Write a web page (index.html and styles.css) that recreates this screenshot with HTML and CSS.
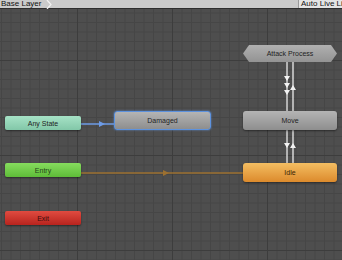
FILE: index.html
```html
<!DOCTYPE html>
<html lang="en">
<head>
  <meta charset="UTF-8">
  <title>Animator</title>
  <link rel="stylesheet" href="styles.css">
</head>
<body>
  <div class="toolbar">
    <div class="crumb">
      <span>Base Layer</span>
      <svg class="chevron" width="8" height="9" viewBox="0 0 8 9">
        <path d="M1 0 L5 4.5 L1 9" fill="none" stroke="#f2f2f2" stroke-width="1.2"/>
      </svg>
    </div>
    <div class="live-link">Auto Live Link</div>
  </div>

  <div class="graph">
    <svg class="links" width="342" height="251" viewBox="0 9 342 251">
      <!-- any state -> damaged -->
      <line x1="81" y1="124" x2="114" y2="124" stroke="#6d9be6" stroke-width="1.4"/>
      <polygon points="99,121 105,124 99,127" fill="#6d9be6"/>

      <!-- entry -> idle -->
      <line x1="81" y1="173" x2="243" y2="173" stroke="#9c7030" stroke-width="1.5"/>
      <polygon points="163,170 169,173 163,176" fill="#9c7030"/>

      <!-- attack process <-> move -->
      <line x1="287" y1="62" x2="287" y2="111" stroke="#ececec" stroke-width="1.3"/>
      <line x1="293" y1="62" x2="293" y2="111" stroke="#ececec" stroke-width="1.3"/>
      <polygon points="284,76 290,76 287,81" fill="#f2f2f2"/>
      <polygon points="284,83 290,83 287,88" fill="#f2f2f2"/>
      <polygon points="284,90 290,90 287,95" fill="#f2f2f2"/>
      <polygon points="290,90 296,90 293,85" fill="#f2f2f2"/>

      <!-- move <-> idle -->
      <line x1="287" y1="130" x2="287" y2="163" stroke="#ececec" stroke-width="1.3"/>
      <line x1="293" y1="130" x2="293" y2="163" stroke="#ececec" stroke-width="1.3"/>
      <polygon points="284,143 290,143 287,148" fill="#f2f2f2"/>
      <polygon points="290,148 296,148 293,143" fill="#f2f2f2"/>
    </svg>

    <div class="node any-state">Any State</div>
    <div class="node state damaged">Damaged</div>
    <div class="node machine">Attack Process</div>
    <div class="node state move">Move</div>
    <div class="node state idle">Idle</div>
    <div class="node entry">Entry</div>
    <div class="node exit">Exit</div>
  </div>
</body>
</html>
```

FILE: styles.css
```css
* {
  box-sizing: border-box;
}
body {
  margin: 0;
  width: 342px;
  height: 260px;
  overflow: hidden;
  font-family: 'Liberation Sans', Arial, sans-serif;
  background-color: #4a4a4a;
}
.toolbar {
  height: 9px;
  display: flex;
  justify-content: space-between;
  background-color: #cbcbcb;
  border-bottom: 1px solid #2e2e2e;
}
.crumb {
  display: flex;
  align-items: flex-start;
  gap: 5px;
  padding-left: 1px;
  font-size: 8px;
  line-height: 8px;
  color: #111;
}
.live-link {
  width: 44px;
  padding-left: 2px;
  font-size: 8px;
  line-height: 8px;
  white-space: nowrap;
  overflow: hidden;
  color: #111;
  background-color: #e4e4e4;
  border-left: 1px solid #9a9a9a;
}
.graph {
  position: relative;
  height: 251px;
  background:
    linear-gradient(90deg, #3d3d3d 1px, transparent 1px) 77px 0 / 95px 95px,
    linear-gradient(#3d3d3d 1px, transparent 1px) 0 51px / 95px 95px,
    linear-gradient(90deg, #464646 1px, transparent 1px) 1px 0 / 9.5px 9.5px,
    linear-gradient(#464646 1px, transparent 1px) 0 3.5px / 9.5px 9.5px,
    #4e4e4e;
}
.links {
  position: absolute;
  left: 0;
  top: 0;
}
.node {
  position: absolute;
  display: flex;
  align-items: center;
  justify-content: center;
  font-size: 7px;
  color: #1e1e1e;
  border-radius: 2px;
  box-shadow: 0 1px 2px rgba(0, 0, 0, 0.45);
}
.any-state {
  left: 5px;
  top: 107px;
  width: 76px;
  height: 14px;
  background: linear-gradient(#a6e2c6, #82c7a8);
}
.entry {
  left: 5px;
  top: 154px;
  width: 76px;
  height: 14px;
  background: linear-gradient(#86dc5e, #5ebc38);
  color: #24441a;
}
.exit {
  left: 5px;
  top: 202px;
  width: 76px;
  height: 14px;
  background: linear-gradient(#e04b40, #b8241e);
  color: #3a0c0a;
}
.state {
  width: 94px;
  height: 19px;
  border-radius: 3px;
  background: linear-gradient(#b4b4b4, #8e8e8e);
}
.damaged {
  left: 114px;
  top: 102px;
  width: 97px;
  border: 1px solid #5d92de;
  box-shadow: 0 0 2px #5d92de;
}
.move {
  left: 243px;
  top: 102px;
}
.idle {
  left: 243px;
  top: 154px;
  background: linear-gradient(#f4be62, #dc8a2c);
  color: #3a2406;
}
.machine {
  left: 243px;
  top: 36px;
  width: 94px;
  height: 17px;
  border-radius: 0;
  box-shadow: none;
  background: linear-gradient(#b0b0b0, #939393);
  clip-path: polygon(6px 0, calc(100% - 6px) 0, 100% 50%, calc(100% - 6px) 100%, 6px 100%, 0 50%);
}
```
